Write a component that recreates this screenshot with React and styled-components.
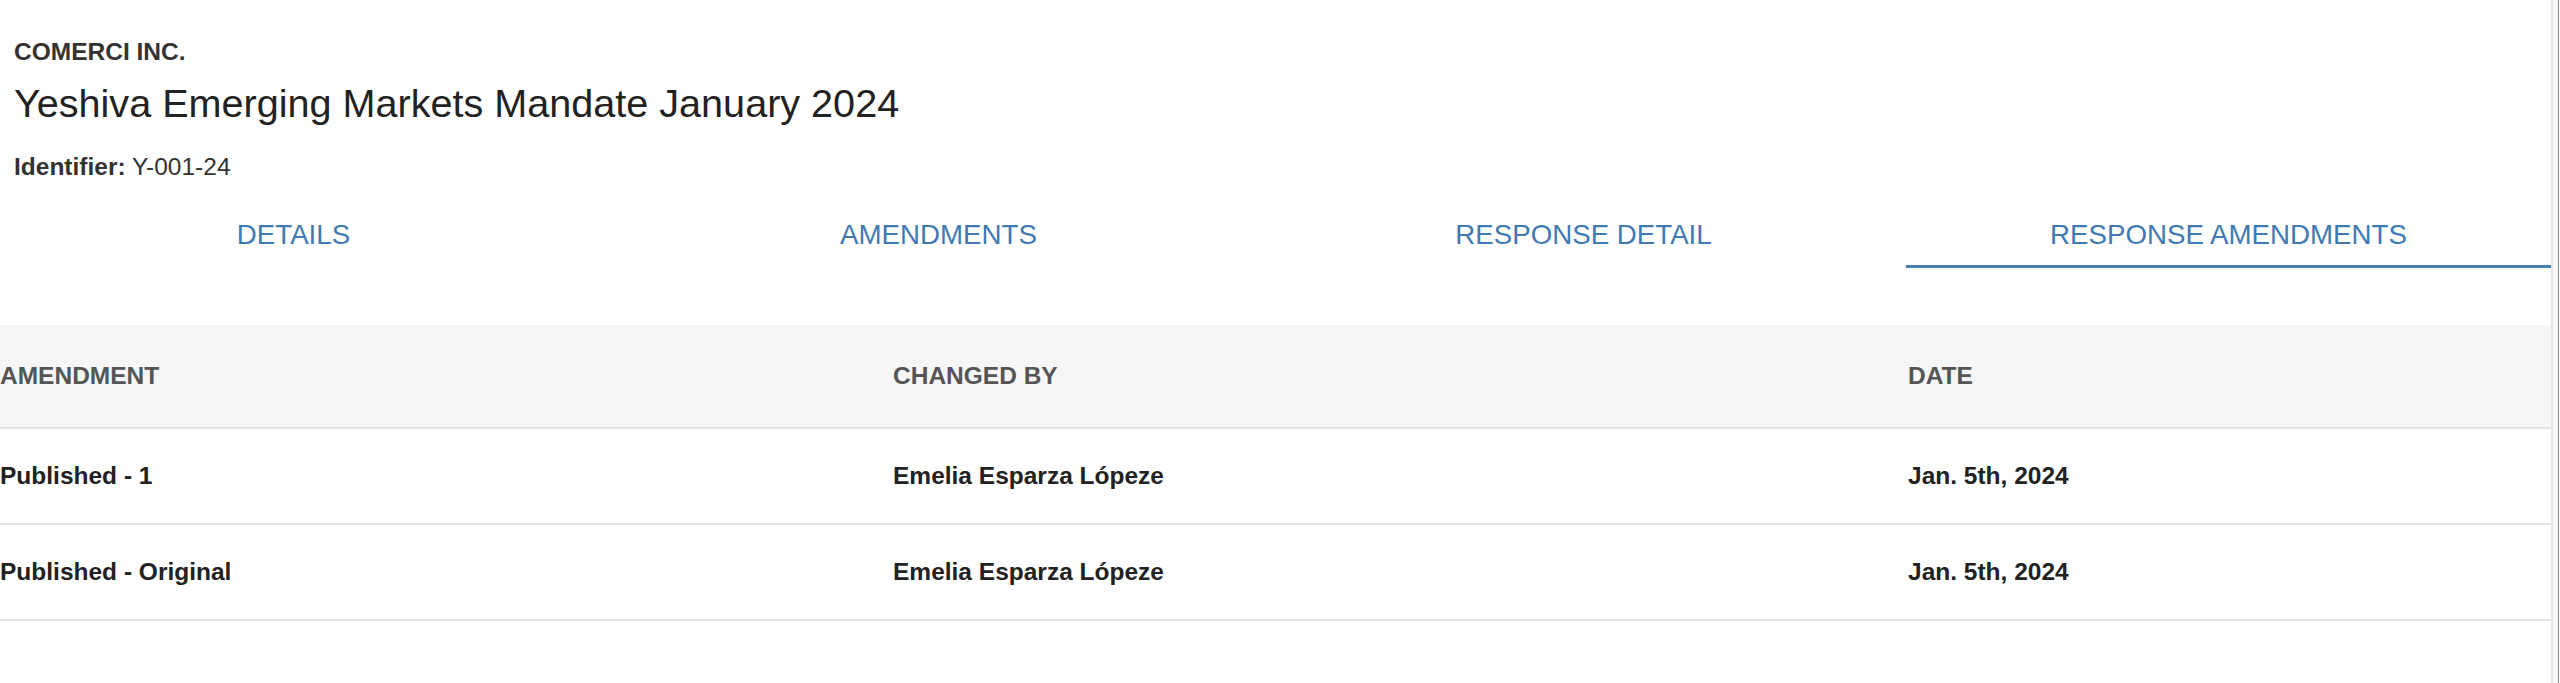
import styled, { createGlobalStyle } from "styled-components";

const GlobalStyle = createGlobalStyle`
  html, body {
    margin: 0;
    padding: 0;
    background: #ffffff;
  }
  body {
    font-family: "Liberation Sans", Arial, Helvetica, sans-serif;
    color: #222222;
    overflow: hidden;
  }
`;

const Page = styled.div`
  display: flex;
  width: 2560px;
  height: 683px;
  overflow: hidden;
`;

const Main = styled.div`
  flex: 1;
  min-width: 0;
`;

// window edge on the right
const Gutter = styled.div`
  width: 5px;
  border-left: 2px solid #e6e6e6;
  border-right: 1px solid #8a8a8a;
  background: #f7f7f7;
  margin-right: 1px;
`;

const Header = styled.header`
  padding: 38px 14px 0;
`;

const Company = styled.div`
  font-size: 24.5px;
  line-height: 28px;
  font-weight: 700;
  color: #333333;
`;

const Title = styled.h1`
  margin: 13px 0 0;
  font-size: 39.6px;
  line-height: 48px;
  font-weight: 400;
  color: #222222;
`;

const Meta = styled.div`
  margin-top: 26px;
  font-size: 24.5px;
  line-height: 28px;
  color: #333333;

  b {
    font-weight: 700;
  }
`;

const Body = styled.div`
  margin-left: -29px;
`;

const Tabs = styled.nav`
  display: grid;
  grid-template-columns: repeat(4, 1fr);
  margin-top: 38px;
`;

const Tab = styled.div`
  text-align: center;
  font-size: 27.7px;
  line-height: 32px;
  color: #3f7ab2;
  padding-bottom: 14px;
  border-bottom: 3px solid ${(p) => (p.$active ? "#4682b4" : "transparent")};
  cursor: pointer;
`;

const Table = styled.div`
  margin-top: 57px;
`;

const Row = styled.div`
  display: grid;
  grid-template-columns: 893px 1015px 1fr;
  align-items: center;
  height: ${(p) => (p.$head ? "102px" : "94px")};
  background: ${(p) => (p.$head ? "#f6f6f6" : "#ffffff")};
  border-bottom: 2px solid #e4e4e4;
`;

const Cell = styled.div`
  padding-left: 29px;
  font-size: 24.5px;
  line-height: 28px;
  font-weight: 700;
  color: ${(p) => (p.$head ? "#555555" : "#222222")};
  white-space: nowrap;
`;

const tabs = ["DETAILS", "AMENDMENTS", "RESPONSE DETAIL", "RESPONSE AMENDMENTS"];

const rows = [
  { amendment: "Published - 1", by: "Emelia Esparza Lópeze", date: "Jan. 5th, 2024" },
  { amendment: "Published - Original", by: "Emelia Esparza Lópeze", date: "Jan. 5th, 2024" },
];

export default function App() {
  return (
    <>
      <GlobalStyle />
      <Page>
        <Main>
          <Header>
            <Company>COMERCI INC.</Company>
            <Title>Yeshiva Emerging Markets Mandate January 2024</Title>
            <Meta>
              <b>Identifier:</b> Y-001-24
            </Meta>
          </Header>
          <Body>
            <Tabs>
              {tabs.map((t, i) => (
                <Tab key={t} $active={i === 3}>
                  {t}
                </Tab>
              ))}
            </Tabs>
            <Table>
              <Row $head>
                <Cell $head>AMENDMENT</Cell>
                <Cell $head>CHANGED BY</Cell>
                <Cell $head>DATE</Cell>
              </Row>
              {rows.map((r) => (
                <Row key={r.amendment}>
                  <Cell>{r.amendment}</Cell>
                  <Cell>{r.by}</Cell>
                  <Cell>{r.date}</Cell>
                </Row>
              ))}
            </Table>
          </Body>
        </Main>
        <Gutter />
      </Page>
    </>
  );
}
